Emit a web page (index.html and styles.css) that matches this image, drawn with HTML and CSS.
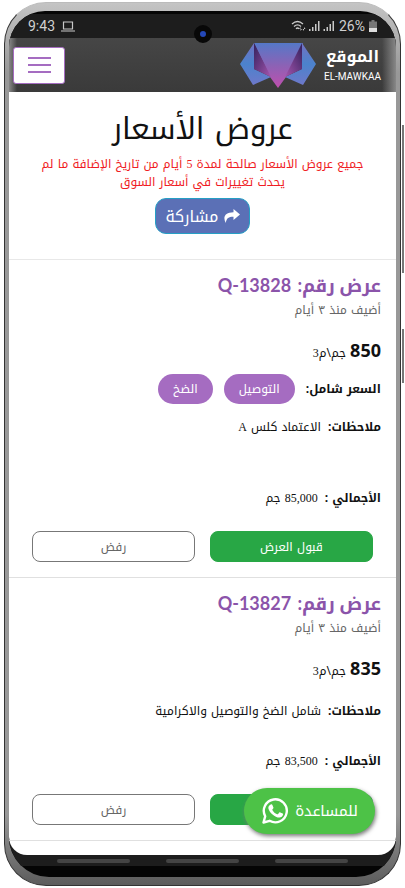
FILE: index.html
```html
<!DOCTYPE html>
<html lang="ar" dir="rtl">
<head>
<meta charset="utf-8">
<meta name="viewport" content="width=device-width, initial-scale=1">
<title>عروض الأسعار</title>
<link rel="stylesheet" href="styles.css">
</head>
<body>
<div class="phone">
  <span class="side-key volume"></span>
  <span class="side-key power"></span>
  <div class="bezel">
    <div class="screen">
      <div class="status" dir="ltr">
        <span>9:43</span>
        <svg class="laptop" viewBox="0 0 14 11" width="14" height="11"><path d="M2.5 1h9v7h-9zM0 10h14" fill="none" stroke="#c9c9c9" stroke-width="1.2"/></svg>
        <span class="camera"></span>
        <svg class="signals" viewBox="0 0 44 12" width="44" height="12">
          <g fill="none" stroke="#c9c9c9" stroke-width="1.3"><path d="M1 4Q6.500-1 12 4M3 6.500Q6.500 3.200 10 6.500M5 8.700Q6.500 7.200 8 8.700"/></g>
          <path d="M9.500 11V7l-1.500 2h3zM13 7v4l-1.500-2h3z" fill="#c9c9c9"/>
          <path d="M18 9h1.500v2H18zM21 7h1.500v4H21zM24 4h1.500v7H24zM27 1h1.500v10H27zM32.500 9H34v2h-1.500zM35.500 7H37v4h-1.500zM38.500 4H40v7h-1.500zM41.500 1H43v10h-1.500z" fill="#c9c9c9"/>
        </svg>
        <span>26%</span>
        <svg class="battery" viewBox="0 0 8 12" width="8" height="12"><path d="M2.500 0h3v1.500H8V8H0V1.500h2.500z" fill="#777"/><path d="M0 8h8v4H0z" fill="#ddd"/></svg>
      </div>
      <header class="bar">
        <a class="brand" href="#" aria-label="الموقع">
          <span class="brand-text">
            <span class="brand-ar">الموقع</span>
            <span class="brand-en" dir="ltr">EL-MAWKAA</span>
          </span>
          <svg viewBox="0 0 76 46" width="76" height="46">
            <defs>
              <linearGradient id="mid" x1="0" y1="0" x2="0" y2="1"><stop offset="0" stop-color="#5578c8"/><stop offset=".5" stop-color="#8c62b5"/><stop offset="1" stop-color="#c04fae"/></linearGradient>
              <linearGradient id="wing" x1="0" y1="0" x2="0" y2="1"><stop offset="0" stop-color="#7370c2"/><stop offset=".5" stop-color="#4b83cd"/><stop offset="1" stop-color="#6e78ca"/></linearGradient>
              <linearGradient id="foldA" x1="0" y1="0" x2="1" y2="1"><stop offset="0" stop-color="#33205c"/><stop offset="1" stop-color="#a455ae"/></linearGradient>
              <linearGradient id="foldB" x1="1" y1="0" x2="0" y2="1"><stop offset="0" stop-color="#33205c"/><stop offset="1" stop-color="#a455ae"/></linearGradient>
            </defs>
            <path d="M14 1h49l-17 34-8 11-8-11z" fill="url(#mid)"/>
            <path d="M14 1L0 22l13 21 18-8-17-8z" fill="url(#wing)"/>
            <path d="M62 1l14 21-13 21-18-8 17-8z" fill="url(#wing)"/>
            <path d="M14 1v26l17 8z" fill="url(#foldA)"/>
            <path d="M62 1v26l-17 8z" fill="url(#foldB)"/>
          </svg>
        </a>
        <button class="menu" type="button" aria-label="القائمة"><span></span><span></span><span></span></button>
      </header>
      <main>
        <section class="intro">
          <h1>عروض الأسعار</h1>
          <p>جميع عروض الأسعار صالحة لمدة <span class="latin">5</span> أيام من تاريخ الإضافة ما لم يحدث تغييرات في أسعار السوق</p>
          <button class="share" type="button">
            <svg viewBox="0 0 16 14" width="16" height="14"><path d="M9.500 0L16 5.500 9.500 11V7.800C5 7.700 2.500 9 1.800 14 -1.500 8 1 3.300 9.500 3.200z" fill="#fff"/></svg>
            <span>مشاركة</span>
          </button>
        </section>
        <article class="offer">
          <h2>عرض رقم: <bdi>Q-13828</bdi></h2>
          <p class="date">أضيف منذ ٣ أيام</p>
          <p class="price"><strong>850</strong> جم\م<span class="latin">3</span></p>
          <div class="includes"><b>السعر شامل:</b><span class="tag">التوصيل</span><span class="tag">الضخ</span></div>
          <p class="row notes"><b>ملاحظات:</b><span>الاعتماد كلس <span class="latin">A</span></span></p>
          <p class="row total"><b>الأجمالي :</b><span><span class="latin">85,000</span> جم</span></p>
          <div class="actions"><button class="accept" type="button">قبول العرض</button><button class="reject" type="button">رفض</button></div>
        </article>
        <article class="offer">
          <h2>عرض رقم: <bdi>Q-13827</bdi></h2>
          <p class="date">أضيف منذ ٣ أيام</p>
          <p class="price"><strong>835</strong> جم\م<span class="latin">3</span></p>
          <p class="row notes"><b>ملاحظات:</b><span>شامل الضخ والتوصيل والاكرامية</span></p>
          <p class="row total"><b>الأجمالي :</b><span><span class="latin">83,500</span> جم</span></p>
          <div class="actions"><button class="accept" type="button" aria-label="قبول العرض"></button><button class="reject" type="button">رفض</button></div>
        </article>
      </main>
      <div class="nav"><span></span><span></span><span></span></div>
    </div>
  </div>
  <a class="help" href="#">
    <span>للمساعدة</span>
    <svg viewBox="0 0 28 28" width="28" height="28">
      <path d="M2.500 25.500l1.700-6.200A11.500 11.500 0 1 1 8.600 23.800z" fill="none" stroke="#fff" stroke-width="2.400" stroke-linejoin="round"/>
      <path d="M9.700 7.500c.8-.4 1.400-.2 1.700.5l1 2.400c.2.500-.1 1-.9 1.900-.3.300-.2.600 0 .9 1.100 1.900 2.600 3.200 4.600 4 .4.200.7.100 1-.2l1.200-1.500c.3-.3.600-.3 1-.1l2.400 1.200c.5.300.5.500.4 1-.4 2-2 3-3.700 3-4.500-.3-10-5-11-9.200-.3-1.600.8-3.200 2.300-3.900z" fill="#fff"/>
    </svg>
  </a>
</div>
</body>
</html>
```
FILE: styles.css
```css
* { box-sizing: border-box; }

body {
  margin: 0;
  padding: 2px 4px 0;
  background: #fff;
  color: #111;
  font-family: "Noto Kufi Arabic", "DejaVu Sans", sans-serif;
  font-size: 12px;
}

h1, h2, p { margin: 0; }

button { font: inherit; cursor: pointer; }

a { text-decoration: none; }

.latin { font-family: "Liberation Serif", serif; }

.phone {
  position: relative;
  padding: 8px 4px;
  border: 1px solid #333;
  border-top-color: #bbb;
  border-radius: 42px;
  background: linear-gradient(#c4c4c4, #989898 8%, #989898 92%, #5c5c5c);
}

.side-key {
  position: absolute;
  right: -4px;
  width: 2px;
  background: #777;
}

.volume { top: 122px; height: 148px; }
.power { top: 326px; height: 54px; }

.bezel {
  padding: 3px 0 11px;
  border-radius: 36px 36px 40px 40px;
  background: #050505;
  overflow: hidden;
}

.screen { background: #1d1d1d; }

.status {
  position: relative;
  display: flex;
  align-items: center;
  height: 24px;
  padding: 0 19px;
  color: #d0d0d0;
  font-family: Roboto, sans-serif;
  font-size: 14px;
}

.laptop { margin-left: 6px; }

.camera {
  position: absolute;
  top: 11px;
  left: calc(50% - 9px);
  width: 18px;
  height: 18px;
  border: 6px solid #080808;
  border-radius: 50%;
  background: #2448b8;
}

.signals { margin: 0 4px 0 auto; }
.battery { margin-left: 4px; }

.bar {
  display: flex;
  align-items: center;
  justify-content: space-between;
  height: 54px;
  padding: 0 15px 0 4px;
  background:
    linear-gradient(to left, #888, transparent 14px),
    linear-gradient(to right, #888, transparent 8px),
    linear-gradient(#464646, #3a3a3a);
}

.brand {
  display: flex;
  align-items: center;
  gap: 8px;
  color: #fff;
}

.brand-text {
  display: flex;
  flex-direction: column;
  align-items: center;
}

.brand-ar {
  font-size: 16px;
  font-weight: bold;
  line-height: 24px;
}

.brand-en {
  font-family: Roboto, sans-serif;
  font-size: 10px;
  line-height: 16px;
}

.menu {
  display: flex;
  flex-direction: column;
  align-items: center;
  justify-content: center;
  gap: 5px;
  width: 52px;
  height: 37px;
  border: 1px solid #a56cc1;
  border-radius: 3px;
  background: #fff;
}

.menu span {
  width: 23px;
  height: 2px;
  background: #a56cc1;
}

main {
  background: #fff;
  border-radius: 0 0 18px 18px;
  padding-bottom: 14px;
}

.intro {
  display: flex;
  flex-direction: column;
  align-items: center;
  height: 168px;
  padding: 13px 24px 0;
  border-bottom: 1px solid #e8e8e8;
  text-align: center;
}

h1 {
  font-size: 30px;
  font-weight: normal;
  line-height: 48px;
}

.intro p {
  color: #f01c24;
  line-height: 18px;
  margin-top: 2px;
}

.share {
  display: flex;
  align-items: center;
  justify-content: center;
  gap: 5px;
  width: 95px;
  height: 36px;
  margin-top: 7px;
  border: 1px solid #269fc5;
  border-radius: 11px;
  background: #5b70b6;
  color: #fff;
  font-size: 16px;
}

.offer {
  padding: 12px 15px 15px;
  border-bottom: 1px solid #e0e0e0;
}

h2 {
  color: #8b54aa;
  font-family: Lato, "Noto Kufi Arabic", "DejaVu Sans", sans-serif;
  font-size: 18px;
  line-height: 26px;
}

h2 bdi { margin-right: 2px; }

.date {
  color: #666;
  line-height: 24px;
}

.price {
  margin-top: 14px;
  line-height: 28px;
}

.price strong {
  font-family: "Noto Sans", sans-serif;
  font-size: 18px;
}

.includes {
  display: flex;
  align-items: center;
  gap: 11px;
  height: 30px;
  margin-top: 7px;
}

.tag {
  padding: 0 15px;
  border-radius: 15px;
  background: #a56cc1;
  color: #fff;
  line-height: 30px;
}

.row {
  display: flex;
  gap: 7px;
  line-height: 24px;
}

.notes { margin-top: 14px; }
.total { margin-top: 26px; }
.includes + .notes { margin-top: 11px; }
.includes ~ .total { margin-top: 47px; }

.actions {
  display: flex;
  gap: 15px;
  margin-top: 21px;
  padding: 0 8px;
}

.actions button {
  flex: 1;
  height: 31px;
  padding: 0;
  border: 1px solid #28a745;
  border-radius: 8px;
}

.actions .accept { background: #28a745; color: #fff; }
.actions .reject { border-color: #777; background: #fff; color: #666; }

.nav {
  display: flex;
  justify-content: space-around;
  align-items: center;
  height: 11px;
  padding: 0 30px;
}

.nav span {
  width: 73px;
  height: 4px;
  border-radius: 2px;
  background: #444;
}

.help {
  position: absolute;
  right: 25px;
  bottom: 51px;
  display: flex;
  align-items: center;
  justify-content: center;
  gap: 6px;
  width: 131px;
  height: 46px;
  border-radius: 23px;
  background: #4dc247;
  box-shadow: 1px 2px 4px #777;
  color: #fff;
  font-size: 15px;
}
```
